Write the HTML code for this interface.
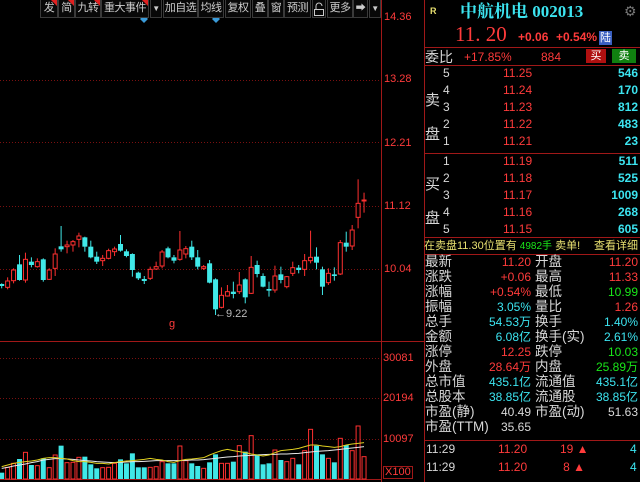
<!DOCTYPE html>
<html><head><meta charset="utf-8"><style>
*{margin:0;padding:0;box-sizing:border-box}
body{width:640px;height:482px;background:#000;overflow:hidden;position:relative;font-family:"Liberation Sans","Noto Sans CJK SC",sans-serif;color:#ddd}
.a{position:absolute;white-space:nowrap;line-height:1}
.r{color:#ff3b3b}.c{color:#3ce4f0}.g{color:#19e619}.w{color:#d8d8d8}.y{color:#e8e070}
.tb{position:absolute;top:0;height:18px;border-right:1px solid #3a3a3a;border-left:1px solid #3a3a3a;border-bottom:1px solid #3a3a3a;font-size:11px;color:#ccc;text-align:center;line-height:17px;background:#080808;white-space:nowrap;overflow:visible;letter-spacing:-0.5px}
.tri:after{content:"";position:absolute;right:0;top:0;border-top:6px solid #e02020;border-left:6px solid transparent}
.hl{position:absolute;height:1px;background:#a01818}
.vl{position:absolute;width:1px;background:#a01818}
.rt{text-align:right}
</style></head><body>
<svg id="s" width="424" height="482" style="position:absolute;left:0;top:0"></svg>
<div class="tb tri" style="left:40px;width:18px">发</div>
<div class="tb tri" style="left:58px;width:17px">简</div>
<div class="tb tri" style="left:75px;width:26px">九转</div>
<div class="tb tri" style="left:101px;width:48px">重大事件</div>
<div class="tb" style="left:150px;width:12px;font-size:8px">▼</div>
<div class="tb" style="left:163px;width:35px">加自选</div>
<div class="tb" style="left:198px;width:26px">均线</div>
<div class="tb" style="left:225px;width:26px">复权</div>
<div class="tb" style="left:252px;width:16px">叠</div>
<div class="tb" style="left:268px;width:16px">窗</div>
<div class="tb" style="left:284px;width:27px">预测</div>
<div class="tb" style="left:312px;width:14px"><svg width="12" height="14" style="margin-top:2px"><path d="M3 7V4a3 3 0 0 1 6 0" fill="none" stroke="#ccc"/><rect x="1.5" y="7.5" width="9" height="6" fill="none" stroke="#ccc"/></svg></div>
<div class="tb" style="left:327px;width:26px">更多</div>
<div class="tb" style="left:353px;width:15px;font-size:10px">➡</div>
<div class="tb" style="left:369px;width:12px;font-size:8px">▼</div>
<div class="a r" style="left:384px;top:12px;font-size:11px">14.36</div>
<div class="a r" style="left:384px;top:74px;font-size:11px">13.28</div>
<div class="a r" style="left:384px;top:138px;font-size:11px">12.21</div>
<div class="a r" style="left:384px;top:201px;font-size:11px">11.12</div>
<div class="a r" style="left:384px;top:264px;font-size:11px">10.04</div>
<div class="a r" style="left:383px;top:353px;font-size:11px">30081</div>
<div class="a r" style="left:383px;top:393px;font-size:11px">20194</div>
<div class="a r" style="left:383px;top:434px;font-size:11px">10097</div>
<div class="a r" style="left:383px;top:466px;font-size:11px;border:1px solid #a01818;padding:0 1px">X100</div>
<div class="a" style="left:215px;top:309px;font-size:11px;color:#bbb">←9.22</div>
<div class="a r" style="left:169px;top:319px;font-size:11px">g</div>
<div class="vl" style="left:424px;top:0;height:482px"></div>
<div class="a y" style="left:430px;top:7px;font-size:9px;font-weight:bold">R</div>
<div class="a c" style="left:460px;top:3px;font-size:17px;font-weight:bold;font-family:'Liberation Serif','Noto Serif CJK SC',serif">中航机电 002013</div>
<div class="a" style="left:624px;top:4px;font-size:14px;color:#777">⚙</div>
<div class="a r" style="left:455px;top:24px;font-size:21px;font-family:'Liberation Serif',serif">11. 20</div>
<div class="a r" style="left:518px;top:31px;font-size:12px;font-weight:bold">+0.06</div>
<div class="a r" style="left:556px;top:31px;font-size:12px;font-weight:bold">+0.54%</div>
<div class="a" style="left:599px;top:31px;width:13px;height:14px;background:#3a5fc0;color:#fff;font-size:11px;text-align:center;line-height:14px">陆</div>
<div class="hl" style="left:424px;top:47px;width:216px"></div>
<div class="a w" style="left:425px;top:50px;font-size:14px">委比</div>
<div class="a r" style="left:464px;top:51px;font-size:12px">+17.85%</div>
<div class="a r" style="left:541px;top:51px;font-size:12px">884</div>
<div class="a" style="left:586px;top:49px;width:20px;height:14px;background:#b01010;color:#fff;font-size:11px;text-align:center;line-height:14px">买</div>
<div class="a" style="left:612px;top:49px;width:24px;height:14px;background:#108010;color:#fff;font-size:11px;text-align:center;line-height:14px">卖</div>
<div class="hl" style="left:424px;top:65px;width:216px"></div>
<div class="hl" style="left:424px;top:153px;width:216px"></div>
<div class="hl" style="left:424px;top:237px;width:216px"></div>
<div class="a w" style="left:425px;top:84px;font-size:15px;line-height:34px;width:16px;white-space:normal">卖盘</div>
<div class="a w" style="left:425px;top:168px;font-size:15px;line-height:34px;width:16px;white-space:normal">买盘</div>
<div id="ob"></div>
<div class="a y" style="left:424px;top:241px;font-size:11px">在卖盘11.30位置有 <span class="g" style="font-size:10px">4982手</span> 卖单!</div>
<div class="a y rt" style="left:580px;top:241px;font-size:11px;width:58px">查看详细</div>
<div class="hl" style="left:424px;top:254px;width:216px"></div>
<div id="st"></div>
<div class="hl" style="left:424px;top:440px;width:216px"></div>
<div class="a w" style="left:426px;top:443px;font-size:12px">11:29</div>
<div class="a r" style="left:498px;top:443px;font-size:12px">11.20</div>
<div class="a r rt" style="left:560px;top:443px;width:25px;font-size:12px">19 ▲</div>
<div class="a c" style="left:630px;top:443px;font-size:12px">4</div>
<div class="a w" style="left:426px;top:461px;font-size:12px">11:29</div>
<div class="a r" style="left:498px;top:461px;font-size:12px">11.20</div>
<div class="a r rt" style="left:560px;top:461px;width:25px;font-size:12px">8 ▲</div>
<div class="a c" style="left:630px;top:461px;font-size:12px">4</div>
<script>
var ob='',pr=['11.25','11.24','11.23','11.22','11.21','11.19','11.18','11.17','11.16','11.15'],
vo=['546','170','812','483','23','511','525','1009','268','605'],lv=[5,4,3,2,1,1,2,3,4,5];
for(var i=0;i<10;i++){var t=(i<5?67+i*17:155+(i-5)*17);
ob+='<div class="a w" style="left:443px;top:'+t+'px;font-size:12px">'+lv[i]+'</div><div class="a r" style="left:503px;top:'+t+'px;font-size:12px">'+pr[i]+'</div><div class="a c rt" style="left:590px;width:48px;top:'+t+'px;font-size:12px;font-weight:bold">'+vo[i]+'</div>';}
document.getElementById('ob').innerHTML=ob;
var S=[['最新','11.20','r','开盘','11.20','r'],['涨跌','+0.06','r','最高','11.33','r'],['涨幅','+0.54%','r','最低','10.99','g'],['振幅','3.05%','c','量比','1.26','r'],['总手','54.53万','c','换手','1.40%','c'],['金额','6.08亿','c','换手(实)','2.61%','c'],['涨停','12.25','r','跌停','10.03','g'],['外盘','28.64万','r','内盘','25.89万','g'],['总市值','435.1亿','c','流通值','435.1亿','c'],['总股本','38.85亿','c','流通股','38.85亿','c'],['市盈(静)','40.49','w','市盈(动)','51.63','w'],['市盈(TTM)','35.65','w','','','w']],h='';
for(var i=0;i<S.length;i++){var t=255+i*15;var s=S[i];
h+='<div class="a w" style="left:425px;top:'+t+'px;font-size:13.5px">'+s[0]+'</div><div class="a '+s[2]+' rt" style="left:470px;width:61px;top:'+(t+1)+'px;font-size:12px">'+s[1]+'</div><div class="a w" style="left:535px;top:'+t+'px;font-size:13.5px">'+s[3]+'</div><div class="a '+s[5]+' rt" style="left:580px;width:58px;top:'+(t+1)+'px;font-size:12px">'+s[4]+'</div>';}
document.getElementById('st').innerHTML=h;
var C=[['c',342,348,340,355],['r',333,352,322,358],['r',300,332,295,340],['c',283,330,255,332],['r',268,330,248,338],['c',275,285,262,292],['r',275,290,265,293],['c',268,330,265,335],['r',300,328,295,330],['r',252,295,235,318],['c',229,238,168,245],['r',225,230,212,250],['r',215,225,210,245],['r',198,208,188,232],['c',202,230,200,245],['c',230,262,212,265],['c',260,275,245,282],['r',265,272,255,288],['r',242,265,236,268],['r',237,245,230,258],['c',222,242,195,245],['c',244,258,238,262],['c',252,300,250,320],['c',308,325,305,330],['c',327,333,318,342],['r',298,325,290,330],['r',290,297,275,300],['r',246,288,240,295],['c',235,262,230,265],['c',262,272,255,280],['r',240,268,183,272],['r',236,252,228,265],['c',230,262,212,270],['c',262,290,240,298],['r',290,295,285,300],['c',280,338,270,340],['c',328,418,325,435],['r',376,412,352,415],['r',365,378,345,380],['c',365,372,335,385],['r',345,365,306,372],['c',328,382,325,400],['r',292,370,258,372],['c',285,312,272,322],['c',318,350,310,352],['c',357,362,335,380],['r',318,360,287,368],['c',313,330,290,340],['r',320,350,318,355],['r',293,310,275,318],['c',293,300,285,310],['r',272,298,252,318],['r',262,272,182,280],['c',260,278,232,298],['c',298,350,290,375],['r',310,338,295,345],['c',313,318,292,332],['r',218,312,210,315],['c',218,230,185,245],['r',180,228,165,240],['r',100,142,28,175],['r',90,92,68,128]];
var V=[428,412,400,387,367,405,407,385,413,375,347,398,397,382,380,403,415,413,412,400,388,400,370,412,412,412,410,395,400,400,348,392,400,408,415,397,373,400,400,395,347,365,317,373,403,400,360,390,395,385,403,362,298,347,373,385,397,325,345,362,288,380];
var g='';
function hd(y,x2){g+='<line x1="0" y1="'+y+'.5" x2="'+x2+'" y2="'+y+'.5" stroke="#7a1010" stroke-dasharray="1,2"/>';}
[80,142,206,269,358,398,439].forEach(function(y){hd(y,381)});
g+='<line x1="381.5" y1="0" x2="381.5" y2="482" stroke="#a01818"/><line x1="0" y1="341.5" x2="424" y2="341.5" stroke="#a01818"/><line x1="0" y1="479.5" x2="381" y2="479.5" stroke="#a01818"/>';
g+='<path d="M144 15l4 4-4 4-4-4z M216 15l4 4-4 4-4-4z" fill="#3a9ad8"/>';
for(var i=0;i<C.length;i++){var c=C[i],x=1.7+i*5.94,col=c[0]=='r'?'#ff3030':'#40e8e8';
var y1=170+c[1]/3,y2=170+c[2]/3,w1=170+c[3]/3,w2=170+c[4]/3,bh=Math.max(1,y2-y1);
g+='<line x1="'+x+'" y1="'+w1+'" x2="'+x+'" y2="'+w2+'" stroke="'+col+'"/>';
if(c[0]=='r')g+='<rect x="'+(x-2)+'" y="'+y1+'" width="4" height="'+bh+'" fill="#000" stroke="'+col+'"/>';
else g+='<rect x="'+(x-2.5)+'" y="'+y1+'" width="5" height="'+bh+'" fill="'+col+'"/>';
var vt=330+V[i]/3,vb=479;
if(c[0]=='r')g+='<rect x="'+(x-2)+'" y="'+vt+'" width="4" height="'+(vb-vt)+'" fill="#000" stroke="#ff3030"/>';
else g+='<rect x="'+(x-2.5)+'" y="'+vt+'" width="5" height="'+(vb-vt)+'" fill="#40e8e8"/>';}
var ya=[410,405,400,397,395,393,390,385,383,383,385,387,392,395,395,397,400,400,402,398,395,393,392,390,388,385,388,390,395,397,392,388,387,385,383,375,368,362,358,362,365,368,372,375,378,375,368,362,360,358,355,350,345,345,348,350,352,350,345,342,340,338];
var wa=[415,412,408,405,402,398,395,390,388,386,386,387,388,390,392,393,395,396,397,398,397,396,395,395,394,393,392,392,392,392,392,391,390,390,389,387,385,383,381,380,378,377,376,375,374,373,373,372,372,371,370,368,366,364,363,362,360,358,356,354,352,350];
var p1='',p2='';for(var i=0;i<62;i++){var x=1.7+i*5.94;p1+=(i?'L':'M')+x+' '+(330+ya[i]/3);p2+=(i?'L':'M')+x+' '+(330+wa[i]/3);}
g+='<path d="'+p2+'" fill="none" stroke="#e8e8e8"/><path d="'+p1+'" fill="none" stroke="#e0d020"/>';
document.getElementById('s').innerHTML=g;
</script>
</body></html>
